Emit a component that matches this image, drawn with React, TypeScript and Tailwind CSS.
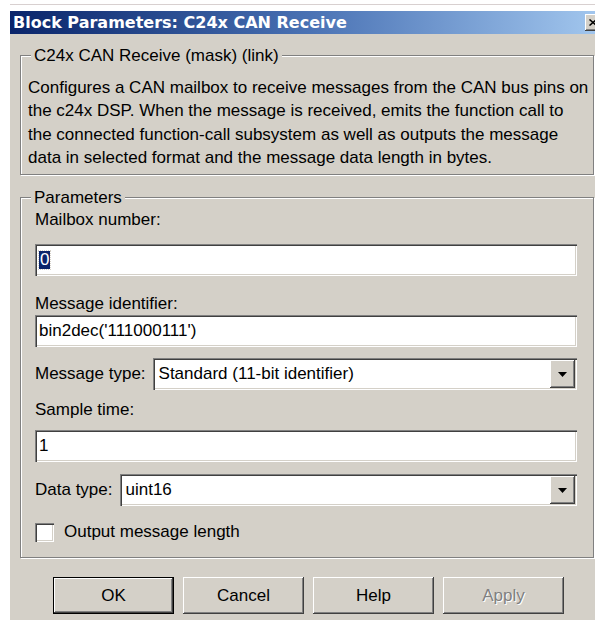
import type { ReactNode } from "react";

const SUNKEN =
  "shadow-[inset_1px_1px_0_#808080,inset_2px_2px_0_#404040,inset_-1px_-1px_0_#ffffff,inset_-2px_-2px_0_#d4d0c8]";
const RAISED =
  "shadow-[inset_-1px_-1px_0_#404040,inset_1px_1px_0_#ffffff,inset_-2px_-2px_0_#808080,inset_2px_2px_0_#d4d0c8]";

const DESCRIPTION = [
  "Configures a CAN mailbox to receive messages from the CAN bus pins on",
  "the c24x DSP. When the message is received, emits the function call to",
  "the connected function-call subsystem as well as outputs the message",
  "data in selected format and the message data length in bytes.",
];

function GroupBox({ title, className, children }: { title: string; className?: string; children: ReactNode }) {
  return (
    <div
      className={`relative border border-[#808080] shadow-[inset_1px_1px_0_#ffffff,1px_1px_0_#ffffff] ${className ?? ""}`}
    >
      <span className="absolute left-[10px] -top-[10px] bg-[#d4d0c8] px-[3px] leading-[20px]">{title}</span>
      {children}
    </div>
  );
}

function TextField({ children, className }: { children: ReactNode; className?: string }) {
  return (
    <div className={`h-[32px] bg-white flex items-center pl-[4px] ${SUNKEN} ${className ?? ""}`}>
      {children}
    </div>
  );
}

function ComboBox({ value }: { value: string }) {
  return (
    <div className={`flex-1 h-[32px] bg-white flex items-center p-[2px] ${SUNKEN}`}>
      <span className="flex-1 pl-[4px]">{value}</span>
      <div className={`w-[25px] h-[28px] bg-[#d4d0c8] flex items-center justify-center ${RAISED}`}>
        <svg width="9" height="5" viewBox="0 0 9 5">
          <path d="M0 0h9L4.5 5z" fill="#000" />
        </svg>
      </div>
    </div>
  );
}

function Button({ label, isDefault, disabled }: { label: string; isDefault?: boolean; disabled?: boolean }) {
  return (
    <div
      className={`w-[121px] h-[37px] bg-[#d4d0c8] flex items-center justify-center ${
        isDefault
          ? "border border-black shadow-[inset_-1px_-1px_0_#404040,inset_1px_1px_0_#ffffff,inset_-2px_-2px_0_#808080]"
          : RAISED
      }`}
    >
      <span className={disabled ? "text-[#808080] [text-shadow:1px_1px_0_#ffffff]" : "text-black"}>{label}</span>
    </div>
  );
}

export default function App() {
  return (
    <div className="w-[595px] h-[620px] bg-white overflow-hidden font-['Liberation_Sans',Arial,sans-serif] text-[17px] text-black">
      <div className="h-[4px]" />
      <div className="ml-[10px] h-px bg-[#d8d0d0]" />
      <div className="h-[6px]" />

      <div className="ml-[10px] w-[600px] h-[610px] bg-[#d4d0c8] flex flex-col">
        {/* title bar */}
        <div className="h-[23px] flex items-center bg-gradient-to-r from-[#0a246a] via-[#4a72b4] to-[#a6caf0] pl-[3px] pr-[9px]">
          <span className="font-['DejaVu_Sans',Verdana,sans-serif] font-bold text-white text-[16px]">
            Block Parameters: C24x CAN Receive
          </span>
          <div className={`ml-auto w-[16px] h-[17px] bg-[#d4d0c8] flex items-center justify-center ${RAISED}`}>
            <svg width="8" height="7" viewBox="0 0 8 7">
              <path d="M0.5 0.5l7 6M7.5 0.5l-7 6" stroke="#000" strokeWidth="1.5" />
            </svg>
          </div>
        </div>

        <GroupBox title="C24x CAN Receive (mask) (link)" className="mt-[21px] ml-[10px] w-[574px] pt-[20px] pb-[5px] pl-[7px]">
          {DESCRIPTION.map((line) => (
            <div key={line} className="leading-[23.3px] whitespace-nowrap">
              {line}
            </div>
          ))}
        </GroupBox>

        <GroupBox title="Parameters" className="mt-[22px] ml-[10px] w-[574px] pl-[14px] pr-[16px] pb-[15px]">
          <div className="mt-[12px] leading-[20px]">Mailbox number:</div>
          <TextField className="mt-[14px]">
            <span className="bg-[#0a246a] text-white px-[1px] leading-[18px] outline-1 outline-dotted outline-[#d4d0c8]">0</span>
          </TextField>

          <div className="mt-[18px] leading-[20px]">Message identifier:</div>
          <TextField className="mt-[1px]">bin2dec('111000111')</TextField>

          <div className="mt-[11px] flex items-center gap-[7px]">
            <span className="leading-[20px]">Message type:</span>
            <ComboBox value="Standard (11-bit identifier)" />
          </div>

          <div className="mt-[10px] leading-[20px]">Sample time:</div>
          <TextField className="mt-[10px]">1</TextField>

          <div className="mt-[12px] flex items-center gap-[7px]">
            <span className="leading-[20px]">Data type:</span>
            <ComboBox value="uint16" />
          </div>

          <div className="mt-[16px] flex items-center gap-[10px]">
            <div className={`w-[19px] h-[19px] bg-white ${SUNKEN}`} />
            <span className="leading-[20px]">Output message length</span>
          </div>
        </GroupBox>

        <div className="mt-[19px] ml-[43px] flex gap-[9px]">
          <Button label="OK" isDefault />
          <Button label="Cancel" />
          <Button label="Help" />
          <Button label="Apply" disabled />
        </div>
      </div>
    </div>
  );
}
